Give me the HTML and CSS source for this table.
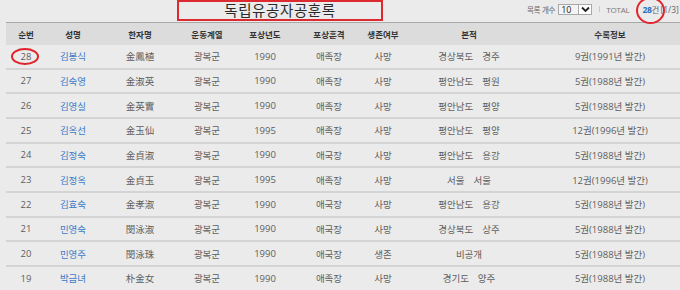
FILE: index.html
```html
<!DOCTYPE html>
<html lang="ko">
<head>
<meta charset="utf-8">
<title>독립유공자공훈록</title>
<link rel="stylesheet" href="styles.css">
</head>
<body>
<div class="page">
  <div class="topbar">
    <h1 class="title">독립유공자공훈록</h1>
    <div class="controls">
      <span class="lbl">목록 개수</span>
      <span class="select"><span class="val">10</span><span class="arrow"><svg width="9" height="7" viewBox="0 0 9 7"><path d="M1 1.5 L4.5 5 L8 1.5" fill="none" stroke="#222" stroke-width="1.8"/></svg></span></span>
      <span class="divider"></span>
      <span class="total">TOTAL</span>
      <span class="count"><b>28</b>건</span>
      <span class="pager">[1/3]</span>
    </div>
  </div>

  <div class="list">
    <div class="row head">
      <div>순번</div><div>성명</div><div>한자명</div><div>운동계열</div><div>포상년도</div><div>포상훈격</div><div>생존여부</div><div>본적</div><div>수록정보</div>
    </div>
    <div class="row"><div>28</div><div class="name">김봉식</div><div>金鳳植</div><div>광복군</div><div>1990</div><div>애족장</div><div>사망</div><div class="pre">경상북도  경주</div><div>9권(1991년 발간)</div></div>
    <div class="row"><div>27</div><div class="name">김숙영</div><div>金淑英</div><div>광복군</div><div>1990</div><div>애족장</div><div>사망</div><div class="pre">평안남도  평원</div><div>5권(1988년 발간)</div></div>
    <div class="row"><div>26</div><div class="name">김영실</div><div>金英實</div><div>광복군</div><div>1990</div><div>애족장</div><div>사망</div><div class="pre">평안남도  평양</div><div>5권(1988년 발간)</div></div>
    <div class="row"><div>25</div><div class="name">김옥선</div><div>金玉仙</div><div>광복군</div><div>1995</div><div>애족장</div><div>사망</div><div class="pre">평안남도  평양</div><div>12권(1996년 발간)</div></div>
    <div class="row"><div>24</div><div class="name">김정숙</div><div>金貞淑</div><div>광복군</div><div>1990</div><div>애국장</div><div>사망</div><div class="pre">평안남도  용강</div><div>5권(1988년 발간)</div></div>
    <div class="row"><div>23</div><div class="name">김정옥</div><div>金貞玉</div><div>광복군</div><div>1995</div><div>애족장</div><div>사망</div><div class="pre">서울  서울</div><div>12권(1996년 발간)</div></div>
    <div class="row"><div>22</div><div class="name">김효숙</div><div>金孝淑</div><div>광복군</div><div>1990</div><div>애국장</div><div>사망</div><div class="pre">평안남도  용강</div><div>5권(1988년 발간)</div></div>
    <div class="row"><div>21</div><div class="name">민영숙</div><div>閔泳淑</div><div>광복군</div><div>1990</div><div>애국장</div><div>사망</div><div class="pre">경상북도  상주</div><div>5권(1988년 발간)</div></div>
    <div class="row"><div>20</div><div class="name">민영주</div><div>閔泳珠</div><div>광복군</div><div>1990</div><div>애국장</div><div>생존</div><div class="pre">비공개</div><div>5권(1988년 발간)</div></div>
    <div class="row"><div>19</div><div class="name">박금녀</div><div>朴金女</div><div>광복군</div><div>1990</div><div>애족장</div><div>사망</div><div class="pre">경기도  양주</div><div>5권(1988년 발간)</div></div>
  </div>

  <span class="mark mark-total"></span>
  <span class="mark mark-row"></span>
</div>
</body>
</html>
```

FILE: styles.css
```css
html, body {
  margin: 0;
  padding: 0;
  background: #ebebeb;
  overflow: hidden;
}

.page {
  position: relative;
  width: 680px;
  height: 290px;
  overflow: hidden;
  font-family: "Open Sans", "Noto Sans CJK KR", sans-serif;
  color: #5e5e5e;
}

.topbar {
  display: flex;
  align-items: flex-start;
  height: 22px;
}

.title {
  margin: 0 0 0 177px;
  width: 206px;
  height: 21px;
  box-sizing: border-box;
  border: 2px solid #dc2a30;
  font-family: "Noto Sans CJK KR", sans-serif;
  font-weight: 400;
  font-size: 14.5px;
  letter-spacing: 0.6px;
  line-height: 16px;
  text-align: center;
  color: #2a2a2a;
}

.controls {
  display: flex;
  align-items: center;
  height: 18px;
  margin-left: 144px;
  white-space: nowrap;
  font-size: 8px;
  color: #666;
}

.lbl {
  font-family: "Noto Sans CJK KR", sans-serif;
  font-size: 7.5px;
  letter-spacing: -0.3px;
}

.select {
  display: flex;
  align-items: stretch;
  margin-left: 3px;
  width: 34px;
  height: 11px;
  box-sizing: border-box;
  border: 1px solid #a8a8a8;
  background: #f4f4f4;
}

.val {
  flex: 1;
  font-size: 9px;
  line-height: 9px;
  padding-left: 2px;
  color: #222;
}

.arrow {
  width: 12px;
  display: flex;
  align-items: center;
  justify-content: center;
  background: #fff;
  border-left: 1px solid #a8a8a8;
}

.divider {
  width: 1px;
  height: 6px;
  background: #c8c8c8;
  margin-left: 7px;
}

.total {
  margin-left: 6px;
  font-size: 8px;
  letter-spacing: -0.2px;
  color: #777;
}

.count {
  margin-left: 13px;
  font-family: "Noto Sans CJK KR", sans-serif;
  font-size: 8.5px;
  color: #666;
}

.count b {
  font-family: "Open Sans", sans-serif;
  color: #2a6cc4;
  font-weight: 700;
  letter-spacing: -0.3px;
}

.pager {
  margin-left: 1px;
  font-size: 8.5px;
  color: #666;
}

.list {
  margin-left: 6px;
  width: 680px;
}

.row {
  display: grid;
  grid-template-columns: 40px 54px 80px 54px 62px 66px 42px 130px 152px;
  align-items: center;
  height: 24.67px;
  box-sizing: border-box;
  border-bottom: 2px solid #d4d4d4;
  font-size: 9.5px;
  text-align: center;
}

.row.head {
  height: 23px;
  border-top: 1px solid #a9a9a9;
  border-bottom: 0;
  background: #dcdcdc;
  font-family: "Noto Sans CJK KR", sans-serif;
  font-weight: 700;
  font-size: 8.5px;
  color: #333;
}

.name {
  color: #3c7cc8;
}

.pre {
  white-space: pre;
  word-spacing: 2px;
}

.mark {
  position: absolute;
  box-sizing: border-box;
  border: 2px solid #e0242b;
  border-radius: 50%;
}

.mark-total {
  left: 636px;
  top: -3px;
  width: 29px;
  height: 27px;
}

.mark-row {
  left: 11px;
  top: 48px;
  width: 28px;
  height: 17px;
}
```
